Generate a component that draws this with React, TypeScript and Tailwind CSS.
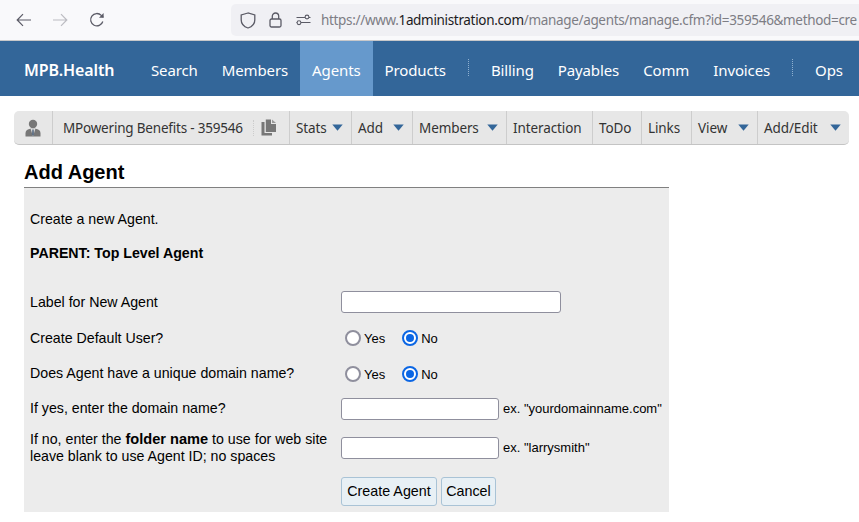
import React from 'react';

const navFont = { fontFamily: '"Noto Sans", sans-serif' };

const Caret = () => (
  <svg width="11" height="7" viewBox="0 0 11 7">
    <path d="M0.3 0.5h10.4L5.5 6.8z" fill="#336699" />
  </svg>
);

const BrowserBar = () => (
  <div className="flex h-[41px] items-center overflow-hidden border-b border-[#c8c8ca] bg-[#f9f9fb]">
    <div className="flex w-[231px] shrink-0 items-center">
      <svg width="16" height="14" viewBox="0 0 16 14" fill="none" stroke="#5b5b66" strokeWidth="1.2" className="ml-[16px]">
        <path d="M15 7H1.5M7 1.2L1.2 7 7 12.8" />
      </svg>
      <svg width="16" height="14" viewBox="0 0 16 14" fill="none" stroke="#bcbcc2" strokeWidth="1.2" className="ml-[20px]">
        <path d="M1 7h13.5M9 1.2L14.8 7 9 12.8" />
      </svg>
      <svg width="16" height="16" viewBox="0 0 16 16" fill="none" stroke="#5b5b66" strokeWidth="1.3" className="ml-[21px]">
        <path d="M13.8 9.5A6.2 6.2 0 1 1 12.3 3.4L14.4 5.4" />
        <path d="M14.6 1v4.8H10" fill="#5b5b66" stroke="none" />
      </svg>
    </div>
    <div className="flex h-[32px] min-w-0 flex-1 items-center overflow-hidden rounded-l-[5px] bg-[#f0f0f4]">
      <svg width="16" height="17" viewBox="0 0 16 17" fill="none" stroke="#5b5b66" strokeWidth="1.3" className="ml-[9px] shrink-0">
        <path d="M8 1L1.2 3v5c0 4 3.2 6.8 6.8 8 3.6-1.2 6.8-4 6.8-8V3z" />
      </svg>
      <svg width="13" height="16" viewBox="0 0 13 16" fill="none" stroke="#5b5b66" strokeWidth="1.3" className="ml-[13px] shrink-0">
        <rect x="1" y="7" width="11" height="8" rx="1.5" />
        <path d="M3.3 7V4.2a3.2 3.2 0 0 1 6.4 0V7" />
      </svg>
      <svg width="15" height="12" viewBox="0 0 15 12" fill="none" stroke="#5b5b66" strokeWidth="1.1" className="ml-[14px] shrink-0">
        <path d="M0.5 3.5H9M13 3.5h1.5M5 8.5h9.5M0.5 8.5H1" />
        <circle cx="11" cy="3" r="1.9" />
        <circle cx="3" cy="8.7" r="1.9" />
      </svg>
      <div className="ml-[10px] whitespace-nowrap text-[13.5px] tracking-[-0.33px] text-[#7d7d84]" style={navFont}>
        https://www.<span className="text-[#1c1b22]">1administration.com</span>/manage/agents/manage.cfm?id=359546&amp;method=cre
      </div>
    </div>
  </div>
);

const NavLink = ({ label, active = false }: { label: string; active?: boolean }) => (
  <div className={`flex h-full items-center px-[12px] ${active ? 'bg-[#6699cc]' : ''}`}>
    <span className="mt-[3px]">{label}</span>
  </div>
);

const NavSep = () => <div className="mx-[10px] mt-[-2px] h-[17px] border-l border-dotted border-[#8fb0d0]" />;

const MainNav = () => (
  <div className="flex h-[55px] items-center bg-[#336699] text-[15px] tracking-[-0.12px] text-white" style={navFont}>
    <div className="ml-[24px] mr-[24px] mt-[3px] w-[91px] text-[16px] font-semibold">MPB.Health</div>
    <NavLink label="Search" />
    <NavLink label="Members" />
    <NavLink label="Agents" active />
    <NavLink label="Products" />
    <NavSep />
    <NavLink label="Billing" />
    <NavLink label="Payables" />
    <NavLink label="Comm" />
    <NavLink label="Invoices" />
    <NavSep />
    <NavLink label="Ops" />
  </div>
);

const ToolCell = ({ label, width, caret = false }: { label: string; width: string; caret?: boolean }) => (
  <div className={`flex h-full shrink-0 items-center justify-between border-r border-[#cdcdcd] pl-[6px] pr-[8px] last:border-r-0 ${width}`}>
    <span className="mt-[1px]">{label}</span>
    {caret && <Caret />}
  </div>
);

const Toolbar = () => (
  <div
    className="ml-[14px] mr-[10px] mt-[15px] flex h-[34px] items-center rounded-[5px] border-b border-[#c4c4c4] bg-[#e7e7e7] text-[13.5px] tracking-[-0.1px] text-[#333333]"
    style={navFont}
  >
    <div className="flex h-full w-[39px] shrink-0 items-center justify-center border-r border-[#cdcdcd]">
      <svg width="16" height="18" viewBox="0 0 16 18" className="mr-[1px]">
        <circle cx="8" cy="5" r="4.2" fill="#777777" />
        <path d="M0.5 17.5v-3.5c0-2.6 2.4-4 4.8-4.2h5.4c2.4.2 4.8 1.6 4.8 4.2v3.5z" fill="#777777" />
        <path d="M5.6 9.8h4.8L8 17.5z" fill="#dddddd" />
        <path d="M7.3 10.6h1.4l.3 5-1 1.6-1-1.6z" fill="#5f7186" />
      </svg>
    </div>
    <div className="flex h-full w-[237px] shrink-0 items-center border-r border-[#cdcdcd] pl-[10px]">
      <span className="mt-[1px] w-[190px] whitespace-nowrap tracking-[-0.2px]">MPowering Benefits - 359546</span>
      <div className="h-[16px] border-l border-dotted border-[#cccccc]" />
      <svg width="16" height="17" viewBox="0 0 16 17" className="ml-[7px]">
        <path d="M0.5 3H3.5V14H11V16.5H0.5z" fill="#777777" />
        <path d="M4.8 0.5H10V5H15V13H4.8z" fill="#777777" />
        <path d="M11 0.5L15 4H11z" fill="#999999" />
      </svg>
    </div>
    <ToolCell label="Stats" width="w-[62px]" caret />
    <ToolCell label="Add" width="w-[61px]" caret />
    <ToolCell label="Members" width="w-[94px]" caret />
    <ToolCell label="Interaction" width="w-[86px]" />
    <ToolCell label="ToDo" width="w-[49px]" />
    <ToolCell label="Links" width="w-[50px]" />
    <ToolCell label="View" width="w-[66px]" caret />
    <ToolCell label="Add/Edit" width="flex-1" caret />
  </div>
);

const TextBox = ({ width }: { width: string }) => (
  <input type="text" className={`h-[22px] rounded-[3px] border border-[#8f8f9d] bg-white ${width}`} />
);

const Radio = ({ label, checked = false }: { label: string; checked?: boolean }) => (
  <div className="flex items-center">
    <div
      className={`flex h-[16px] w-[16px] items-center justify-center rounded-full border-2 bg-white ${checked ? 'border-[#0b66e4]' : 'border-[#8f8f9d]'}`}
    >
      {checked && <div className="h-[8px] w-[8px] rounded-full bg-[#0b66e4]" />}
    </div>
    <span className="ml-[3px] translate-y-[1px] text-[13px]">{label}</span>
  </div>
);

const YesNo = () => (
  <div className="flex gap-[17px] pl-[4px]">
    <Radio label="Yes" />
    <Radio label="No" checked />
  </div>
);

const Row = ({ label, height, children }: { label: React.ReactNode; height: string; children: React.ReactNode }) => (
  <div className={`flex items-center ${height}`}>
    <div className="w-[311px] shrink-0 leading-[17px]">{label}</div>
    <div className="flex items-center">{children}</div>
  </div>
);

const Btn = ({ label, width }: { label: string; width: string }) => (
  <button className={`h-[29px] rounded-[3px] border border-[#a9c3d6] bg-[#e8f0f5] text-[14.3px] text-black ${width}`}>{label}</button>
);

const AddAgentForm = () => (
  <div className="ml-[24px] mt-[15px] w-[645px]" style={{ fontFamily: '"Liberation Sans", Arial, sans-serif' }}>
    <h1 className="border-b border-[#808080] pb-[3px] text-[20px] font-bold leading-[24px] text-black">Add Agent</h1>
    <div className="h-[324px] bg-[#ececec] pl-[6px] pt-[21px] text-[14.2px] text-black">
      <div className="h-[20px] leading-[20px]">Create a new Agent.</div>
      <div className="mt-[14px] h-[20px] font-bold leading-[20px]">PARENT: Top Level Agent</div>
      <div className="mt-[21px] flex flex-col">
        <Row label="Label for New Agent" height="h-[36px]">
          <TextBox width="w-[220px]" />
        </Row>
        <Row label="Create Default User?" height="h-[36px]">
          <YesNo />
        </Row>
        <Row label="Does Agent have a unique domain name?" height="h-[35px]">
          <YesNo />
        </Row>
        <Row label="If yes, enter the domain name?" height="h-[35px]">
          <TextBox width="w-[158px]" />
          <span className="ml-[4px] text-[13px]">ex. "yourdomainname.com"</span>
        </Row>
        <Row
          label={
            <>
              If no, enter the <b className="text-[14.6px]">folder name</b> to use for web site
              <br />
              leave blank to use Agent ID; no spaces
            </>
          }
          height="h-[44px]"
        >
          <TextBox width="w-[158px]" />
          <span className="ml-[4px] text-[13px]">ex. "larrysmith"</span>
        </Row>
        <div className="mt-[7px] flex gap-[4px] pl-[311px]">
          <Btn label="Create Agent" width="w-[96px]" />
          <Btn label="Cancel" width="w-[55px]" />
        </div>
      </div>
    </div>
  </div>
);

export default function App() {
  return (
    <div className="h-[522px] w-[859px] overflow-hidden bg-white">
      <BrowserBar />
      <MainNav />
      <Toolbar />
      <AddAgentForm />
    </div>
  );
}
